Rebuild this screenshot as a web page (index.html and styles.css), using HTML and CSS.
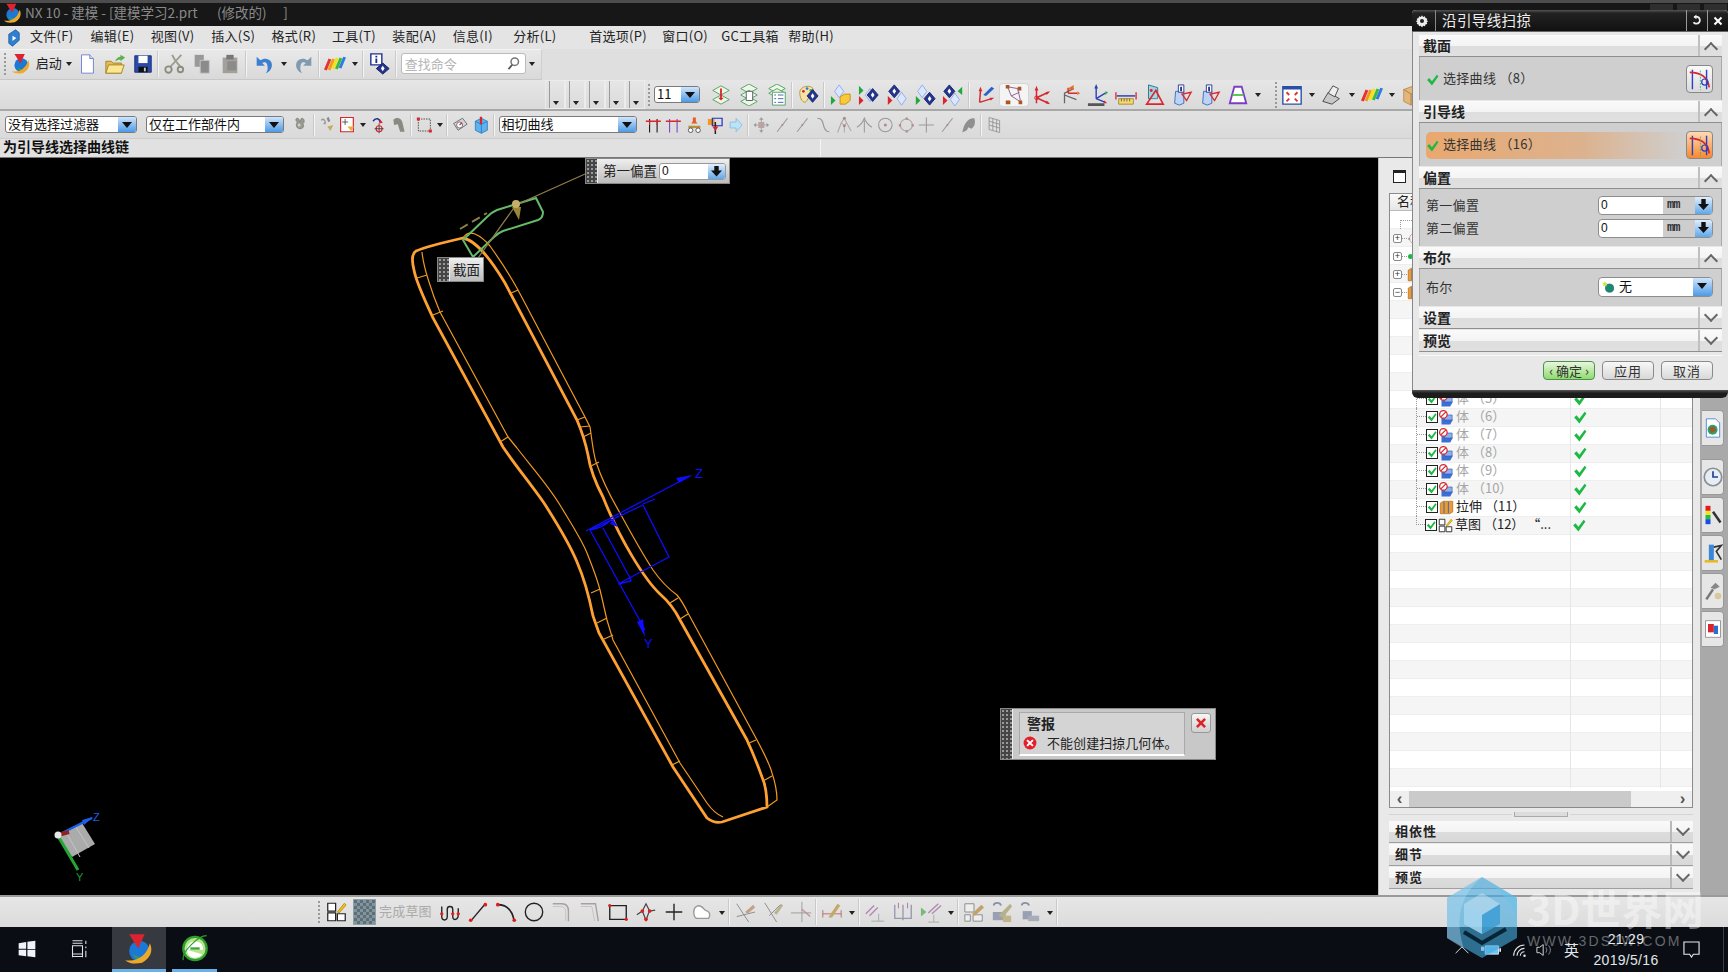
FILE: index.html
```html
<!DOCTYPE html>
<html lang="zh-CN">
<head>
<meta charset="utf-8">
<title>NX 10 - 建模</title>
<link rel="stylesheet" href="styles.css">
</head>
<body>
<svg class="defs" aria-hidden="true">
<defs>
<g id="dl"><path d="M0-7l5 7-5 7-5-7z" fill="#dbe7ff" stroke="#8fa8e8"/></g>
<g id="dd"><path d="M0-7l6 7-6 7-6-7z" fill="#24358f" stroke="#18246a"/><path d="M0-3l2 3-2 3-2-3z" fill="#fff"/></g>
<g id="gt"><path d="M0-5l5 5-5 5z" fill="#1fa83c"/></g>
<g id="rt"><path d="M0-5l5 5-5 5z" fill="#d8262c"/></g>
<g id="lay"><path d="M12-5l9 5-9 5-9-5z" fill="#eef7e6" stroke="#4f9f60"/></g>
</defs>
<symbol id="nx" viewBox="0 0 24 24"><circle cx="12" cy="14" r="8" fill="#1a78d6"/><path d="M7 16c3 3 8 4 10 1-2 5-8 5-10-1z" fill="#3aa24a"/><path d="M4 1h12l-5 11z" fill="#dc2430"/><path d="M1 21c9 2 17-4 19-13 3 6 0 12-6 15-5 1-10 1-13-2z" fill="#efa92a"/></symbol>
<symbol id="mn" viewBox="0 0 24 24"><path d="M5 7l9-6 5 4v10l-9 8-5-4z" fill="#2f7fd0" stroke="#1d5a9e"/><path d="M10 9v7l5-4z" fill="#fff"/></symbol>
<symbol id="doc" viewBox="0 0 24 24"><path d="M6 2h9l4 4v16H6z" fill="#fff" stroke="#6a80d0"/><path d="M15 2v4h4" fill="#d7dff7" stroke="#6a80d0"/></symbol>
<symbol id="open" viewBox="0 0 24 24"><path d="M2 9h6l2 2h9v11H2z" fill="#e2bd53" stroke="#a4812c"/><path d="M2 22l3-9h17l-3 9z" fill="#fbe692" stroke="#a4812c"/><path d="M12 9c1-3 4-5 6-5V2l5 3-5 4V7c-2 0-4 1-6 2z" fill="#58b14a"/></symbol>
<symbol id="save" viewBox="0 0 24 24"><path d="M3 3h18v18H3z" fill="#2b4bab" stroke="#1c2f78"/><path d="M7 3h10v8H7z" fill="#fff"/><path d="M7 15h10v6H7z" fill="#111"/><path d="M13 16h2v4h-2z" fill="#ccc"/></symbol>
<symbol id="cut" viewBox="0 0 24 24"><path d="M20 2L8 15M10 2c2 5 5 9 9 13" stroke="#9b9b8e" stroke-width="2" fill="none"/><circle cx="6" cy="18" r="3.5" fill="none" stroke="#8c8c7c" stroke-width="2"/><circle cx="19" cy="18" r="3" fill="none" stroke="#8c8c7c" stroke-width="2"/></symbol>
<symbol id="copy" viewBox="0 0 24 24"><path d="M4 2h10v13H4z" fill="#999"/><path d="M10 8h10v14H10z" fill="#8b8b8b" stroke="#c7c7c7"/></symbol>
<symbol id="paste" viewBox="0 0 24 24"><path d="M4 5h16v17H4z" fill="#a2a098"/><path d="M8 2h8v5H8z" fill="#777"/><path d="M9 9h10v10H9z" fill="#8b8b8b"/></symbol>
<symbol id="undo" viewBox="0 0 24 24"><path d="M4 4v10h9l-3-3c3-2 6-1 6 6 0 2-1 4-2 5 5-2 8-7 6-12-2-4-8-5-12-2z" fill="#3c7ecf"/></symbol>
<symbol id="redo" viewBox="0 0 24 24"><path d="M20 4v10h-9l3-3c-3-2-6-1-6 6 0 2 1 4 2 5-5-2-8-7-6-12 2-4 8-5 12-2z" fill="#7f9bb0"/></symbol>
<symbol id="rb" viewBox="0 0 24 24"><path d="M5 6l3 1-5 12-3-1z" fill="#e4322c"/><path d="M9 6l3 1-5 12-3-1z" fill="#f29a1e"/><path d="M13 5l3 1-5 12-3-1z" fill="#f2e21e"/><path d="M17 5l3 1-5 12-3-1z" fill="#3db83d"/><path d="M21 4l3 1-5 12-3-1z" fill="#2b7be4"/></symbol>
<symbol id="info" viewBox="0 0 24 24"><path d="M2 1h12v12H2z" fill="#fff" stroke="#1c2f8a" stroke-width="1.5"/><path d="M7 3h2v2H7zM7 6h2v5H7z" fill="#1c2f8a"/><path d="M15 11l7 6-7 6-7-6z" fill="#24358f" stroke="#0e1a5a"/><path d="M15 14l2 3-2 3-2-3z" fill="#fff"/></symbol>
<symbol id="mag" viewBox="0 0 24 24"><circle cx="14" cy="9" r="6" fill="#fff" stroke="#777" stroke-width="2.4"/><path d="M10 14l-6 7" stroke="#555" stroke-width="3"/></symbol>
<symbol id="l1" viewBox="0 0 24 24"><use href="#lay" y="7"/><use href="#lay" y="17"/><path d="M12 5v11" stroke="#d8262c" stroke-width="2"/><path d="M9 15h6l-3 3z" fill="#d8262c"/></symbol>
<symbol id="l2" viewBox="0 0 24 24"><use href="#lay" y="5"/><use href="#lay" y="12"/><use href="#lay" y="19"/><path d="M9 8h7v10H9z" fill="#fff" stroke="#556"/></symbol>
<symbol id="l3" viewBox="0 0 24 24"><use href="#lay" y="5"/><use href="#lay" y="10"/><path d="M7 9h14v14H7z" fill="#fff" stroke="#4f9f60"/><path d="M9 12h2m2 0h6M9 16h2m2 0h6M9 20h2m2 0h6" stroke="#3a5aa8"/></symbol>
<symbol id="pal" viewBox="0 0 24 24"><path d="M3 9c0-7 13-9 15-3 1 4-5 3-5 6s-1 5-4 8c-4 0-6-6-6-11z" fill="#f5e4a8" stroke="#b8923a"/><circle cx="7" cy="8" r="1.5" fill="#d8262c"/><circle cx="11" cy="5" r="1.5" fill="#2b7be4"/><circle cx="15" cy="7" r="1.5" fill="#3db83d"/><use href="#dd" x="17" y="13"/></symbol>
<symbol id="d1" viewBox="0 0 24 24"><use href="#dl" x="10" y="8"/><path d="M11 14l5-3h6v7l-5 4h-6z" fill="#f9c93a" stroke="#c48e18"/><use href="#gt" x="1" y="18"/></symbol>
<symbol id="d2" viewBox="0 0 24 24"><use href="#gt" x="1" y="7"/><use href="#rt" x="1" y="18"/><use href="#dl" x="13" y="12"/><use href="#dd" x="16" y="12"/></symbol>
<symbol id="d3" viewBox="0 0 24 24"><use href="#dd" x="9" y="8"/><use href="#dl" x="17" y="16"/><use href="#rt" x="2" y="18"/></symbol>
<symbol id="d4" viewBox="0 0 24 24"><use href="#dl" x="9" y="8"/><use href="#dd" x="17" y="16"/><use href="#gt" x="2" y="18"/></symbol>
<symbol id="d5" viewBox="0 0 24 24"><use href="#dd" x="8" y="8"/><use href="#dl" x="14" y="17"/><use href="#rt" x="1" y="18"/><path d="M22 3v9l-5-4z" fill="#1fa83c"/></symbol>
<symbol id="c1" viewBox="0 0 24 24"><path d="M5 20L6 7M5 20l13-4" stroke="#d8262c" stroke-width="1.6" fill="none"/><path d="M6 3l2 5H4zM21 15l-4 3-1-3z" fill="#d8262c"/><path d="M9 12l9-9 3 2-9 8z" fill="#2a62c8"/></symbol>
<symbol id="c2" viewBox="0 0 24 24"><path d="M5 3l4 10 11 7M9 13l9-4M5 3l11 2 3 13" stroke="#8a5a88" fill="none"/><path d="M3 1h4v4H3zM16 3h4v4h-4zM3 18h5v4H3zM17 18h4v4h-4z" fill="#a52"/></symbol>
<symbol id="c3" viewBox="0 0 24 24"><path d="M6 21V6M6 15l13-6M6 15l13 6" stroke="#d8262c" stroke-width="1.6" fill="none"/><path d="M6 2l2 5H4zM21 8l-4 4-1-3zM21 22l-5-1 1-3z" fill="#d8262c"/><circle cx="6" cy="15" r="2" fill="none" stroke="#d8262c"/></symbol>
<symbol id="c4" viewBox="0 0 24 24"><path d="M6 21V10l10-5M6 12l13 5" stroke="#666" stroke-width="1.4" fill="none"/><path d="M10 10V4M10 10h10" stroke="#d8262c" stroke-width="1.6"/><path d="M8 6l8-5v5zM20 8l3 2-3 2z" fill="#ea6a24"/></symbol>
<symbol id="c5" viewBox="0 0 24 24"><path d="M10 16V3M10 16l10-6M10 16l10 4" stroke="#2a3fb0" stroke-width="1.5" fill="none"/><path d="M10 0l2 5H8z" fill="#2a3fb0"/><path d="M20 8l3 1-3 3z" fill="#1fa83c"/><path d="M22 21l-4 0 1-3z" fill="#d8262c"/><path d="M1 21h18v3H1z" fill="#555"/></symbol>
<symbol id="rul" viewBox="0 0 24 24"><path d="M2 13h20" stroke="#2a3fb0" stroke-width="1.6"/><path d="M1 9v8M23 9v8" stroke="#d8262c" stroke-width="1.4"/><path d="M4 16h16v6H4z" fill="#f2d878" stroke="#a8892c"/><path d="M7 16v3m3-3v3m3-3v3m3-3v3" stroke="#7a641c"/></symbol>
<symbol id="ang" viewBox="0 0 24 24"><path d="M6 1l10 3v12H6z" fill="#9fd3e8" stroke="#2a6e88"/><path d="M4 22L14 7l8 15z" fill="#fff" fill-opacity=".1" stroke="#d8262c" stroke-width="1.8"/><circle cx="9" cy="7" r="1.6" fill="#d8262c"/></symbol>
<symbol id="w1" viewBox="0 0 24 24"><path d="M5 8h9v13l-5 2-5-2z" fill="#bcd3f4" stroke="#3d6bc0"/><path d="M8 1h6v8H8z" fill="#fff" stroke="#24358f"/><path d="M10 3h2v5h-2z" fill="#24358f"/><path d="M12 11l10-2-5 9z" fill="none" stroke="#d8262c" stroke-width="1.4"/></symbol>
<symbol id="w2" viewBox="0 0 24 24"><path d="M8 3h8l5 18H3z" fill="#fff" stroke="#7a3ec0" stroke-width="2"/><path d="M6 12h12" stroke="#4cc24c" stroke-width="2"/></symbol>
<symbol id="fit" viewBox="0 0 24 24"><path d="M2 3h20v19H2z" fill="#fff" stroke="#2a4fa8" stroke-width="1.5"/><path d="M2 3h20v3H2z" fill="#2a4fa8"/><path d="M6 9l3 3M18 9l-3 3M6 19l3-3M18 19l-3-3" stroke="#e2332c" stroke-width="2"/></symbol>
<symbol id="rend" viewBox="0 0 24 24"><path d="M2 19l6-10 12 7-8 6z" fill="#c8c8c8" stroke="#444"/><path d="M8 10l5-8 6 3-4 9z" fill="#eee" stroke="#444"/></symbol>
<symbol id="box" viewBox="0 0 24 24"><path d="M3 6l11-4 8 4-11 5zM3 6v13l8 4V11zM22 6v12l-11 5V11z" fill="#e3b77c" stroke="#b98d52"/></symbol>
<symbol id="f1" viewBox="0 0 24 24"><path d="M7 3c-3 0-3 4 0 5-3 2-2 9 3 9s6-4 4-7c3-1 2-7-1-7-2 0-2 3-3 5-1-2-1-5-3-5z" fill="#9a9a90" stroke="#777"/><circle cx="9" cy="12" r="2" fill="#d0d0c8"/></symbol>
<symbol id="f2" viewBox="0 0 24 24"><path d="M4 6c2-4 6 0 5 4h-2" stroke="#999" fill="none" stroke-width="2"/><path d="M12 14l8-2-4 8z" fill="#c4ad62"/><path d="M12 2h3v6h-3z" fill="#888" transform="rotate(-20 13 5)"/></symbol>
<symbol id="f3" viewBox="0 0 24 24"><path d="M3 2h17v19H3z" fill="#fff" stroke="#d8262c" stroke-width="1.6"/><path d="M5 8h8M9 4v8" stroke="#333"/><path d="M12 14h9l-4 6z" fill="#e8b030"/></symbol>
<symbol id="f4" viewBox="0 0 24 24"><path d="M5 7c3-5 9-4 9 1" stroke="#24358f" stroke-width="2" fill="none"/><path d="M14 4l4 5-5 1z" fill="#d8262c"/><path d="M13 10v13" stroke="#222"/><circle cx="13" cy="17" r="4" fill="none" stroke="#d8262c" stroke-width="1.5"/><path d="M7 17h12" stroke="#222"/></symbol>
<symbol id="f5" viewBox="0 0 24 24"><path d="M4 5c4-4 10-3 12 3l3 13h-6l-3-10-5 1z" fill="#8a8a82"/></symbol>
<symbol id="sbox" viewBox="0 0 24 24"><path d="M4 4h16v16H4z" fill="none" stroke="#222" stroke-dasharray="2 1.4"/><path d="M2 2h4v4H2zM18 18h4v4h-4z" fill="#d8262c"/></symbol>
<symbol id="cam" viewBox="0 0 24 24"><path d="M3 10l12-7 6 8-12 8z" fill="#d0d4dc" stroke="#555"/><circle cx="11" cy="12" r="4" fill="#fff" stroke="#555"/><path d="M11 12l3-3" stroke="#d8262c" stroke-width="1.6"/></symbol>
<symbol id="cube" viewBox="0 0 24 24"><path d="M4 7l8-4 8 4v12l-8 4-8-4z" fill="#5cb3ee" stroke="#2a6fb8"/><path d="M12 11v12M4 7l8 4 8-4" stroke="#2a6fb8" fill="none"/><path d="M10 1h3v10h-3z" fill="#d8262c"/></symbol>
<symbol id="tt1" viewBox="0 0 24 24"><path d="M7 4v18M17 4v18" stroke="#111" stroke-width="1.4"/><path d="M2 7h20" stroke="#d8262c" stroke-width="2"/><path d="M7 6v6M17 6v6" stroke="#d8262c" stroke-width="1.4"/></symbol>
<symbol id="tt2" viewBox="0 0 24 24"><path d="M7 4v18M17 4v18" stroke="#7a3ec0" stroke-width="1.4"/><path d="M2 7h20" stroke="#d8262c" stroke-width="2"/></symbol>
<symbol id="hat" viewBox="0 0 24 24"><path d="M10 2h4v5l2 3H8l2-3z" fill="#ea5a24"/><path d="M4 13h16v3H4z" fill="#b8923a"/><circle cx="7" cy="19" r="3" fill="#fff" stroke="#333"/><circle cx="17" cy="19" r="3" fill="#fff" stroke="#333"/></symbol>
<symbol id="sq" viewBox="0 0 24 24"><path d="M2 4h9v8H2z" fill="#f29a1e"/><path d="M8 3h13v10H8z" fill="none" stroke="#1c2fc8" stroke-width="1.6"/><path d="M12 8v16" stroke="#222" stroke-width="2"/><path d="M8 14h8l-4 6z" fill="#d8262c"/></symbol>
<symbol id="arr" viewBox="0 0 24 24"><path d="M5 8h8V3l8 9-8 9v-5H5z" fill="#b9e4f8" stroke="#7fb7d8"/></symbol>
<symbol id="g1" viewBox="0 0 24 24"><path d="M12 2v20M2 12h20" stroke="#aaa" stroke-width="1.5"/><path d="M12 2l3 3H9zM12 22l-3-3h6zM2 12l3-3v6zM22 12l-3 3V9z" fill="#999"/><path d="M8 8h8v8H8z" fill="#b9a3a3"/></symbol>
<symbol id="g2" viewBox="0 0 24 24"><path d="M5 21L19 3" stroke="#9a9a9a" stroke-width="1.5"/><circle cx="12" cy="12" r="1.4" fill="#b48888"/></symbol>
<symbol id="g3" viewBox="0 0 24 24"><path d="M4 3c9 0 7 10 10 14 1 2 4 4 6 4" stroke="#999" stroke-width="1.6" fill="none"/></symbol>
<symbol id="g4" viewBox="0 0 24 24"><path d="M3 22l5-13 4-6 3 6 6 11M8 9l4 4 3-4M12 13v9" stroke="#aaa" stroke-width="1.4" fill="none"/><circle cx="12" cy="3" r="2" fill="#b48888"/><circle cx="12" cy="13" r="2" fill="#b48888"/></symbol>
<symbol id="g5" viewBox="0 0 24 24"><path d="M2 15C8 12 10 8 12 3c2 5 5 9 10 12M12 6v16" stroke="#999" stroke-width="1.4" fill="none"/></symbol>
<symbol id="g6" viewBox="0 0 24 24"><circle cx="12" cy="12" r="9" fill="none" stroke="#999" stroke-width="1.4"/><circle cx="12" cy="12" r="2" fill="#b48888"/></symbol>
<symbol id="g7" viewBox="0 0 24 24"><circle cx="12" cy="12" r="8" fill="none" stroke="#aaa" stroke-width="1.4"/><path d="M11 2h3v3h-3zM11 19h3v3h-3zM2 11h3v3H2zM19 11h3v3h-3z" fill="#b48888"/></symbol>
<symbol id="g8" viewBox="0 0 24 24"><path d="M12 2v20M2 12h20" stroke="#999" stroke-width="1.4"/></symbol>
<symbol id="g9" viewBox="0 0 24 24"><path d="M4 22C6 10 12 2 20 3c2 6 0 12-4 14l-4-2-2 4z" fill="#8f8f8f"/></symbol>
<symbol id="g10" viewBox="0 0 24 24"><path d="M5 2l14 4v16L5 18z" fill="#e0e0e0" stroke="#888"/><path d="M5 7l14 4M5 12l14 4M10 3v16M15 5v16" stroke="#888"/></symbol>
<symbol id="win" viewBox="0 0 24 24"><path d="M2 5l9-1.400v8H2zM12.500 3.300L22 2v10h-9.500zM2 13h9v7.600L2 19.400zM12.500 13H22v9l-9.500-1.300z" fill="#f0f4f8"/></symbol>
<symbol id="task" viewBox="0 0 24 24"><path d="M3 2h12M3 5h12M3 8h12v10H3zM3 21h12M3 18v4M15 18v4M19 2v4M19 9v2M19 14v8" fill="none" stroke="#dfe3e8" stroke-width="1.300"/></symbol>
<symbol id="ie" viewBox="0 0 24 24"><circle cx="12" cy="12" r="10" fill="#b6e58a" stroke="#2f9e2f" stroke-width="2"/><path d="M5 13h14c0-5-3-7-7-7s-7 3-7 7c0 4 3 7 7 7 3 0 5-1 6-3" fill="#fff"/><path d="M8 11h8v2H8z" fill="#3aa43a"/><path d="M2 22C0 15 15 1 22 1" stroke="#2f9e2f" fill="none"/></symbol>
<symbol id="chk" viewBox="0 0 24 24"><path d="M2 13l4-4 5 6L20 3l3 3-12 17z" fill="#1eb944"/></symbol>
<symbol id="body" viewBox="0 0 24 24"><path d="M4 12h14l4 4-4 7H4z" fill="#3b6fd4"/><path d="M9 8h12v8H9z" fill="#8fb0ec" stroke="#2d56b0"/><circle cx="7" cy="7" r="6" fill="#fff" stroke="#d8262c" stroke-width="2"/><path d="M3 11l8-8" stroke="#d8262c" stroke-width="2"/></symbol>
<symbol id="ext" viewBox="0 0 24 24"><path d="M2 5l5-3h15v17l-5 3H2z" fill="#f09a2c" stroke="#a85f14"/><path d="M8 3v18M15 3v18" stroke="#2b6fd0" stroke-width="1.600"/></symbol>
<symbol id="skt" viewBox="0 0 24 24"><path d="M2 2h9v9H2zM2 13h9v9H2zM13 14h9v8h-9z" fill="#fff" stroke="#222" stroke-width="1.400"/><path d="M13 12l8-10 2 2-8 9z" fill="#f2c21e" stroke="#b58a10"/></symbol>
<symbol id="cu" viewBox="0 0 26 27"><path d="M5 3v22M21 3v22" stroke="#2a3fc8" stroke-width="1.600"/><path d="M2 6c10 0 20 3 22 17" stroke="#d8262c" stroke-width="1.800" fill="none"/><path d="M14 4v22" stroke="#3aa88a" stroke-dasharray="2 1.500"/><circle cx="19" cy="17" r="3.500" fill="none" stroke="#2a3fc8" stroke-width="1.400"/></symbol>
<symbol id="bool" viewBox="0 0 24 24"><circle cx="13" cy="14" r="7" fill="#1a8a78" stroke="#0d5a4e"/><path d="M5 2l1.500 3 3 .5-2 2.200.5 3.300L5 9.500 2 11l.5-3.300L.5 5.500l3-.5z" fill="#c8e640"/></symbol>
<symbol id="err" viewBox="0 0 24 24"><circle cx="12" cy="12" r="11" fill="#e3202a"/><path d="M7 7l10 10M17 7L7 17" stroke="#fff" stroke-width="3.400"/></symbol>
<symbol id="x" viewBox="0 0 24 24"><path d="M5 5l14 14M19 5L5 19" stroke="#dd2228" stroke-width="4.500"/></symbol>
<symbol id="t1" viewBox="0 0 24 24"><path d="M4 1h11l5 5v17H4z" fill="#fff" stroke="#3d7bd0"/><circle cx="11.500" cy="14" r="6" fill="#2fa16a"/><path d="M7 12l6-2 3 5-6 3z" fill="#9a5a2c"/></symbol>
<symbol id="t2" viewBox="0 0 24 24"><circle cx="12" cy="12" r="10.500" fill="#e7edf4" stroke="#8a8f96" stroke-width="2"/><path d="M12 5v7h6" stroke="#1c3f9a" stroke-width="2" fill="none"/></symbol>
<symbol id="t3" viewBox="0 0 24 24"><path d="M3 1h6v6H3z" fill="#e21c1c"/><path d="M3 7h6v5H3z" fill="#f4e21c"/><path d="M3 12h6v5H3z" fill="#1cc23c"/><path d="M3 17h6v6H3z" fill="#1c4ce2"/><path d="M12 8l9 13" stroke="#333" stroke-width="3"/></symbol>
<symbol id="t4" viewBox="0 0 24 24"><path d="M7 2h6v20H7z" fill="#3a86d8"/><path d="M2 22h16" stroke="#e8b81c" stroke-width="3"/><path d="M13 5l9-2-6 7 6 10" stroke="#333" stroke-width="2" fill="none"/></symbol>
<symbol id="t5" viewBox="0 0 24 24"><path d="M9 8l6-6 5 5-6 3z" fill="#888"/><path d="M12 10l-8 12" stroke="#777" stroke-width="3"/><circle cx="18" cy="18" r="4" fill="#d8c89a"/></symbol>
<symbol id="t6" viewBox="0 0 24 24"><path d="M3 2h18v20H3z" fill="#fff" stroke="#888"/><path d="M6 6h7v10H6z" fill="#d8262c"/><path d="M13 8h5v10h-5z" fill="#2a6fd0"/></symbol>
</svg>

<div class="app">
  <header class="title">
    <svg class="tlogo"><use href="#nx"/></svg>
    <span class="ttext">NX 10 - 建模 - [建模学习2.prt　  (修改的)　 ]</span>
    <span class="winbtns"><i></i><i></i><i></i></span>
  </header>

  <nav class="menu">
    <svg class="mlogo"><use href="#mn"/></svg>
    <span class="m">文件(F)</span><span class="m">编辑(E)</span><span class="m">视图(V)</span><span class="m">插入(S)</span><span class="m">格式(R)</span><span class="m">工具(T)</span><span class="m">装配(A)</span><span class="m">信息(I)</span><span class="m m-w">分析(L)</span><span class="m m-p">首选项(P)</span><span class="m m-c">窗口(O)</span><span class="m m-g">GC工具箱</span><span class="m">帮助(H)</span>
  </nav>

  <div class="row1">
    <div class="tb tb1">
      <span class="gr"></span>
      <svg class="s21 lg"><use href="#nx"/></svg><span class="start">启动</span><span class="c c-start"></span>
      <svg class="s28"><use href="#doc"/></svg><svg class="s28"><use href="#open"/></svg><svg class="s28"><use href="#save"/></svg><span class="sp"></span>
      <svg class="s28"><use href="#cut"/></svg><svg class="s28"><use href="#copy"/></svg><svg class="s28"><use href="#paste"/></svg><span class="sp sp-l"></span>
      <svg class="s28"><use href="#undo"/></svg><span class="c"></span><svg class="s28"><use href="#redo"/></svg><span class="sp"></span>
      <svg class="s28"><use href="#rb"/></svg><span class="c"></span><span class="sp sp-w"></span>
      <svg class="s28"><use href="#info"/></svg><span class="sp sp-w"></span>
      <span class="search"><span class="ph">查找命令</span><svg class="mag"><use href="#mag"/></svg></span>
      <span class="c"></span>
    </div>
  </div>

  <div class="row2">
    <span class="stack"></span><span class="stack"></span><span class="stack"></span><span class="stack"></span><span class="stack"></span>
    <span class="gr"></span>
    <span class="combo c11"><span class="cv">11</span><span class="dd"></span></span>
    <svg class="s28"><use href="#l1"/></svg><svg class="s28"><use href="#l2"/></svg><svg class="s28"><use href="#l3"/></svg><span class="sp"></span>
    <svg class="s28"><use href="#pal"/></svg><span class="sp sp-w"></span>
    <svg class="s28"><use href="#d1"/></svg><svg class="s28"><use href="#d2"/></svg><svg class="s28"><use href="#d3"/></svg><svg class="s28"><use href="#d4"/></svg><svg class="s28"><use href="#d5"/></svg><span class="sp sp-w"></span>
    <svg class="s28"><use href="#c1"/></svg><svg class="s28 act"><use href="#c2"/></svg><svg class="s28"><use href="#c3"/></svg><svg class="s28"><use href="#c4"/></svg><svg class="s28"><use href="#c5"/></svg><svg class="s28"><use href="#rul"/></svg><svg class="s28"><use href="#ang"/></svg><svg class="s28"><use href="#w1"/></svg><svg class="s28"><use href="#w1"/></svg><svg class="s28"><use href="#w2"/></svg><span class="c"></span>
    <span class="brk"><span class="gr"></span></span>
    <svg class="s28"><use href="#fit"/></svg><span class="c"></span><svg class="s28"><use href="#rend"/></svg><span class="c"></span><svg class="s28"><use href="#rb"/></svg><span class="c"></span><svg class="s28"><use href="#box"/></svg>
  </div>

  <div class="row3">
    <span class="combo f1c"><span class="cv">没有选择过滤器</span><span class="dd"></span></span>
    <span class="combo f2c"><span class="cv">仅在工作部件内</span><span class="dd"></span></span>
    <svg class="s21 first"><use href="#f1"/></svg><span class="sp"></span>
    <svg class="s21"><use href="#f2"/></svg><svg class="s21"><use href="#f3"/></svg><span class="c"></span><svg class="s21"><use href="#f4"/></svg><svg class="s21"><use href="#f5"/></svg><span class="sp"></span>
    <svg class="s21"><use href="#sbox"/></svg><span class="c"></span><span class="sp"></span>
    <svg class="s21"><use href="#cam"/></svg><svg class="s21"><use href="#cube"/></svg><span class="sp"></span>
    <span class="combo f3c"><span class="cv">相切曲线</span><span class="dd"></span></span>
    <svg class="s21"><use href="#tt1"/></svg><svg class="s21"><use href="#tt2"/></svg><svg class="s21"><use href="#hat"/></svg><svg class="s21"><use href="#sq"/></svg><svg class="s21"><use href="#arr"/></svg><span class="sp"></span>
    <svg class="s21"><use href="#g1"/></svg><svg class="s21"><use href="#g2"/></svg><svg class="s21"><use href="#g2"/></svg><svg class="s21"><use href="#g3"/></svg><svg class="s21"><use href="#g4"/></svg><svg class="s21"><use href="#g5"/></svg><svg class="s21"><use href="#g6"/></svg><svg class="s21"><use href="#g7"/></svg><svg class="s21"><use href="#g8"/></svg><svg class="s21"><use href="#g2"/></svg><svg class="s21"><use href="#g9"/></svg><span class="sp"></span>
    <svg class="s21"><use href="#g10"/></svg>
  </div>

  <div class="cue"><span class="cuetext">为引导线选择曲线链</span><span class="cuerest"></span></div>

  <main class="work">
    <div class="view">
      <svg class="model" viewBox="0 158 1378 737" width="1378" height="737">
        <g fill="none" stroke="#ffa033">
          <path stroke-width="2.800" d="M463 238C450 241 425 247 416 251C411 254 412 262 414 270C416 282 424 298 433 318L503 447C515 465 530 483 544 503C560 528 570 545 577 562C584 578 589 596 593 616L599 633L673 767L707 818C712 822 717 823 722 822L767 807C767 795 766 786 762 777C757 763 752 751 747 740L680 620C675 610 668 601 660 594C645 580 620 540 603 497C595 482 590 468 588 455C585 440 582 432 577 420L505 283C490 258 475 240 463 238Z"/>
          <path stroke="#f39a1f" stroke-width="1.200" d="M422 252C423 262 425 270 429 282C433 295 437 305 440 312L508 437L517 448"/>
          <path stroke="#f39a1f" stroke-width="1.200" d="M463 238C466 233 470 232 475 234C482 237 485 240 490 246C500 260 510 275 518 290L585 417L590 427C592 440 593 452 596 462C602 480 610 496 620 513C632 535 642 553 653 570C660 580 670 590 677 595C682 601 685 607 688 613L757 740C765 755 770 765 772 773C776 785 777 793 777 800L767 807"/>
          <path stroke="#f39a1f" stroke-width="1.200" d="M517 448C530 465 548 485 560 505C572 525 582 540 587 553C593 568 597 578 600 590C603 602 605 612 607 620L613 640L680 763L707 803C712 810 718 815 723 817"/>
          <path stroke="#f39a1f" stroke-width="1.200" d="M417 278L427 275M433 315L443 311M500 442L508 437M509 294L518 290M577 420L585 417M580 427L590 426M583 437L591 433M589 467L599 462M591 593L600 589M597 623L607 618M602 640L613 635M672 765L680 761M670 603L678 598M680 619L688 614M747 744L756 740M763 781L772 776"/>
        </g>
        <path fill="none" stroke="#66bb6a" stroke-width="2" d="M463 240L487 217Q492 212 497 210L536 198L543 212Q543 218 538 220L503 231Q498 233 494 237L473 257Z"/>
        <path fill="none" stroke="#8f7d48" stroke-width="1.200" d="M585 174L516 205L478 258"/>
        <path fill="none" stroke="#8f7d48" stroke-width="2" stroke-dasharray="9 5" d="M460 229L487 213"/>
        <path fill="#9a8638" d="M512 207L521 207L519 220Z"/>
        <circle cx="516" cy="204" r="4" fill="#c5b06a"/>
        <g fill="none" stroke="#0d0dff" stroke-width="1.300">
          <path d="M586 531L690 476M590 530L645 630M590 530L643 505L669 557L618 584M603 528L630 578M618 584L631 581L630 578M643 504L655 499M590 530Q603 528 612 519"/>
        </g>
        <path fill="#0d0dff" d="M693 475L679 483L676 478ZM645 637L637 622L643 619ZM613 519L618 527L610 524Z"/>
        <text class="axis" x="695" y="478">Z</text>
        <text class="axis" x="644" y="648">Y</text>
        <path fill="#ababab" d="M58 835L82 823L95 844L72 857Z"/>
        <path fill="none" stroke="#c4c4c4" d="M66 832L80 857M76 827L89 848"/>
        <path d="M58 835L92 818" stroke="#1860e8" stroke-width="2.500"/>
        <path fill="#1860e8" d="M93 817L82 820L84 825Z"/>
        <path d="M58 836L78 870" stroke="#22a833" stroke-width="3"/>
        <path d="M58 835L69 832" stroke="#8c2222" stroke-width="4"/>
        <circle cx="58" cy="835" r="3.500" fill="#e8e8e8"/>
        <text class="triz" x="93" y="821">Z</text>
        <text class="triy" x="76" y="881">Y</text>
      </svg>
    </div>
    <aside class="nav">
      <div class="navtop"><span class="winbox"></span></div>
      <div class="table">
        <div class="thead"><span class="th">名称</span></div>
        <div class="tbody">
          <div class="tr"><span class="dots"></span><svg class="ic"><use href="#g6"/></svg></div>
          <div class="tr"><span class="pm">+</span><span class="dash"></span><svg class="ic"><use href="#g7"/></svg></div>
          <div class="tr"><span class="pm">+</span><span class="dash"></span><span class="gd"></span></div>
          <div class="tr"><span class="pm">+</span><span class="dash"></span><svg class="ic"><use href="#ext"/></svg></div>
          <div class="tr"><span class="pm">−</span><span class="dash"></span><svg class="ic"><use href="#ext"/></svg></div>
          <div class="hidden-rows"></div>
          <div class="tr ch"><span class="tk"></span><span class="cb"><svg><use href="#chk"/></svg></span><svg class="ic"><use href="#body"/></svg><span class="nm off">体 （5）</span><svg class="ok"><use href="#chk"/></svg></div>
          <div class="tr ch"><span class="tk"></span><span class="cb"><svg><use href="#chk"/></svg></span><svg class="ic"><use href="#body"/></svg><span class="nm off">体 （6）</span><svg class="ok"><use href="#chk"/></svg></div>
          <div class="tr ch"><span class="tk"></span><span class="cb"><svg><use href="#chk"/></svg></span><svg class="ic"><use href="#body"/></svg><span class="nm off">体 （7）</span><svg class="ok"><use href="#chk"/></svg></div>
          <div class="tr ch"><span class="tk"></span><span class="cb"><svg><use href="#chk"/></svg></span><svg class="ic"><use href="#body"/></svg><span class="nm off">体 （8）</span><svg class="ok"><use href="#chk"/></svg></div>
          <div class="tr ch"><span class="tk"></span><span class="cb"><svg><use href="#chk"/></svg></span><svg class="ic"><use href="#body"/></svg><span class="nm off">体 （9）</span><svg class="ok"><use href="#chk"/></svg></div>
          <div class="tr ch"><span class="tk"></span><span class="cb"><svg><use href="#chk"/></svg></span><svg class="ic"><use href="#body"/></svg><span class="nm off">体 （10）</span><svg class="ok"><use href="#chk"/></svg></div>
          <div class="tr ch"><span class="tk"></span><span class="cb"><svg><use href="#chk"/></svg></span><svg class="ic"><use href="#ext"/></svg><span class="nm">拉伸 （11）</span><svg class="ok"><use href="#chk"/></svg></div>
          <div class="tr ch last"><span class="tk"></span><span class="cb"><svg><use href="#chk"/></svg></span><svg class="ic"><use href="#skt"/></svg><span class="nm">草图 （12） “...</span><svg class="ok"><use href="#chk"/></svg></div>
        </div>
        <div class="hscroll"><span class="ar">‹</span><span class="thumb"></span><span class="ar">›</span></div>
      </div>
      <div class="split"><span class="handle"></span></div>
      <div class="nh"><span>相依性</span><b class="chev dn"></b></div>
      <div class="nh"><span>细节</span><b class="chev dn"></b></div>
      <div class="nh"><span>预览</span><b class="chev dn"></b></div>
    </aside>
    <div class="tabs">
      <span class="tab"><svg><use href="#t1"/></svg></span>
      <span class="tab"><svg><use href="#t2"/></svg></span>
      <span class="tab"><svg><use href="#t3"/></svg></span>
      <span class="tab"><svg><use href="#t4"/></svg></span>
      <span class="tab"><svg><use href="#t5"/></svg></span>
      <span class="tab"><svg><use href="#t6"/></svg></span>
    </div>
  </main>

  <div class="sketchbar">
    <span class="gr"></span>
    <svg class="s21 sk0"><use href="#skt"/></svg>
    <span class="flag"></span>
    <span class="fin">完成草图</span>
    <svg class="s28"><use href="#b1"/></svg><svg class="s28"><use href="#b2"/></svg><svg class="s28"><use href="#b3"/></svg><svg class="s28"><use href="#b4"/></svg><svg class="s28"><use href="#b5"/></svg><svg class="s28"><use href="#b6"/></svg><svg class="s28"><use href="#b7"/></svg><svg class="s28"><use href="#b8"/></svg><svg class="s28"><use href="#b9"/></svg><svg class="s28"><use href="#b10"/></svg><span class="c"></span><span class="sp"></span>
    <svg class="s28"><use href="#b11"/></svg><svg class="s28"><use href="#b12"/></svg><svg class="s28"><use href="#b13"/></svg><span class="sp"></span>
    <svg class="s28"><use href="#b14"/></svg><span class="c"></span><span class="sp"></span>
    <svg class="s28"><use href="#b15"/></svg><svg class="s28"><use href="#b16"/></svg><svg class="s28"><use href="#b17"/></svg><span class="c"></span><span class="sp"></span>
    <svg class="s28"><use href="#b18"/></svg><svg class="s28"><use href="#b19"/></svg><svg class="s28"><use href="#b20"/></svg><span class="c"></span><span class="sp"></span>
  </div>

  <footer class="taskbar">
    <svg class="tk-win"><use href="#win"/></svg>
    <svg class="tk-view"><use href="#task"/></svg>
    <span class="tk-app active"><svg><use href="#nx"/></svg></span>
    <span class="tk-app ie"><svg><use href="#ie"/></svg></span>
    <span class="tray">
      <svg class="tr-i" viewBox="0 0 20 14"><path d="M2 11l8-8 8 8" fill="none" stroke="#dfe3e8" stroke-width="1.200"/></svg>
      <svg class="tr-i bat" viewBox="0 0 24 14"><path d="M5 2h16v10H5z" fill="#6fc4f4" stroke="#eaf4fb"/><path d="M0 3h4v5H0z" fill="#eaf4fb"/><path d="M22 5h2v4h-2z" fill="#eaf4fb"/></svg>
      <svg class="tr-i wifi" viewBox="0 0 18 16"><path d="M2 15a13 13 0 0 1 13-13M6 15a9 9 0 0 1 9-9M10 15a5 5 0 0 1 5-5" fill="none" stroke="#e2e6ea" stroke-width="1.300"/><circle cx="15" cy="15" r="1.500" fill="#e2e6ea"/></svg>
      <svg class="tr-i vol" viewBox="0 0 20 16"><path d="M1 5h3l4-3v12l-4-3H1z" fill="none" stroke="#e2e6ea"/><path d="M11 5a5 5 0 0 1 0 6M14 3a8 8 0 0 1 0 10" fill="none" stroke="#8a9096"/></svg>
      <span class="ime">英</span>
      <span class="clock"><span>21:29</span><span>2019/5/16</span></span>
      <svg class="tr-i note" viewBox="0 0 18 18"><path d="M1 1h16v13h-6l-2 3-2-3H1z" fill="none" stroke="#e6eaee" stroke-width="1.200"/></svg>
      <span class="desk"></span>
    </span>
  </footer>

  <!-- overlays -->
  <div class="pop pop-off">
    <span class="grip"></span>
    <span class="poplab">第一偏置</span>
    <span class="popinput"><span class="cv">0</span><span class="dd2"></span></span>
  </div>
  <div class="pop pop-sec"><span class="grip"></span><span class="poplab">截面</span></div>
  <div class="pop pop-warn">
    <span class="grip"></span>
    <div class="warnbox">
      <strong>警报</strong>
      <div class="warnmsg"><svg><use href="#err"/></svg><span>不能创建扫掠几何体。</span></div>
    </div>
    <span class="warnx"><svg><use href="#x"/></svg></span>
  </div>

  <section class="dialog">
    <div class="dtitle">
      <svg class="gear" viewBox="0 0 24 24"><path d="M12 2l2 3 3-1 1 3 3 1-1 3 3 1-3 2 1 3-3 1-1 3-3-1-2 3-2-3-3 1-1-3-3-1 1-3-3-2 3-1-1-3 3-1 1-3 3 1z" fill="#eee"/><circle cx="12" cy="12" r="3.500" fill="#222"/></svg>
      <span class="dname">沿引导线扫掠</span>
      <span class="dbtn"><svg viewBox="0 0 24 24"><path d="M7 5h6a6 6 0 1 1-7 9" fill="none" stroke="#eee" stroke-width="3"/><path d="M11 1v8l-5-4z" fill="#eee"/></svg></span>
      <span class="dbtn"><svg viewBox="0 0 24 24"><path d="M6 6l12 12M18 6L6 18" stroke="#fff" stroke-width="3.500"/></svg></span>
    </div>
    <div class="dbody">
      <div class="gh"><span>截面</span><b class="chev up"></b></div>
      <div class="gb sel"><div class="lab"><svg><use href="#chk"/></svg><span>选择曲线 （8）</span></div><span class="cubtn"><svg><use href="#cu"/></svg></span></div>
      <div class="gh gt"><span>引导线</span><b class="chev up"></b></div>
      <div class="gb sel"><div class="lab on"><svg><use href="#chk"/></svg><span>选择曲线 （16）</span></div><span class="cubtn on"><svg><use href="#cu"/></svg></span></div>
      <div class="gh gt"><span>偏置</span><b class="chev up"></b></div>
      <div class="gb off">
        <div class="fld"><span class="fl">第一偏置</span><span class="num"><span class="cv">0</span><span class="mm">mm</span><span class="dd2"></span></span></div>
        <div class="fld"><span class="fl">第二偏置</span><span class="num"><span class="cv">0</span><span class="mm">mm</span><span class="dd2"></span></span></div>
      </div>
      <div class="gh gt"><span>布尔</span><b class="chev up"></b></div>
      <div class="gb boolb"><div class="fld"><span class="fl">布尔</span><span class="num bl"><svg><use href="#bool"/></svg><span class="cv">无</span><span class="dd"></span></span></div></div>
      <div class="gh gt"><span>设置</span><b class="chev dn"></b></div>
      <div class="gh gt"><span>预览</span><b class="chev dn"></b></div>
      <div class="dfoot"><button class="btn ok2">‹ 确定 ›</button><button class="btn">应用</button><button class="btn">取消</button></div>
    </div>
    <div class="dbottom"></div>
  </section>

  <div class="wm">
    <svg class="wmlogo" viewBox="0 0 72 82">
      <path d="M36 0L71 21V61L36 81L1 61V21Z" fill="#43a9de" fill-opacity=".62"/>
      <path d="M36 0L71 21V40C62 20 48 8 36 0Z" fill="#69c2ec" fill-opacity=".5"/>
      <path d="M1 61V21L36 0C15 18 8 40 18 72Z" fill="#bfe3f5" fill-opacity=".35"/>
      <path d="M36 16L18 27V47L36 57L54 47V27Z" fill="#eaf6fc" fill-opacity=".35"/>
      <path d="M36 38L54 27V47L36 57Z" fill="#2f97d0" fill-opacity=".8"/>
      <path d="M18 27L36 38V57L18 47Z" fill="#9dd2ee" fill-opacity=".8"/>
      <path d="M18 55L36 66L60 52" fill="none" stroke="#062434" stroke-width="4"/>
    </svg>
    <span class="wmt">3D世界网</span>
    <span class="wmu">WWW.3DSJW.COM</span>
  </div>
</div>

<svg class="defs" aria-hidden="true">
<symbol id="b1" viewBox="0 0 24 24"><path d="M3 6v11c0 5 6 5 6 0V9c0-4 6-4 6 0v8c0 5 6 4 6-2V8" fill="none" stroke="#222" stroke-width="1.500"/><circle cx="3" cy="14" r="1.800" fill="#e01c1c"/><circle cx="15" cy="14" r="1.800" fill="#e01c1c"/><circle cx="21" cy="14" r="1.800" fill="#e01c1c"/></symbol>
<symbol id="b2" viewBox="0 0 24 24"><path d="M4 22L20 3" stroke="#222" stroke-width="1.500"/><circle cx="4" cy="21" r="2" fill="#e01c1c"/><circle cx="20" cy="4" r="2" fill="#e01c1c"/></symbol>
<symbol id="b3" viewBox="0 0 24 24"><path d="M3 4C13 4 19 11 21 22" fill="none" stroke="#222" stroke-width="1.800"/><circle cx="3" cy="4" r="2" fill="#e01c1c"/><circle cx="21" cy="21" r="2" fill="#e01c1c"/></symbol>
<symbol id="b4" viewBox="0 0 24 24"><circle cx="12" cy="12" r="9.500" fill="none" stroke="#222" stroke-width="1.500"/></symbol>
<symbol id="b5" viewBox="0 0 24 24"><path d="M2 3h10c5 0 7 3 7 8v11" fill="none" stroke="#a8a0a0" stroke-width="1.500"/><path d="M2 6h8c4 0 6 2 6 6v10" fill="none" stroke="#c8c0c0"/></symbol>
<symbol id="b6" viewBox="0 0 24 24"><path d="M2 3h16l3 19" fill="none" stroke="#a8a0a0" stroke-width="1.500"/><path d="M2 6h12l3 16" fill="none" stroke="#c8c0c0"/></symbol>
<symbol id="b7" viewBox="0 0 24 24"><path d="M3 5h18v15H3z" fill="none" stroke="#222" stroke-width="1.500"/><circle cx="3" cy="5" r="1.800" fill="#e01c1c"/><circle cx="21" cy="20" r="1.800" fill="#e01c1c"/></symbol>
<symbol id="b8" viewBox="0 0 24 24"><path d="M2 15l6-4 4-8 4 8 6-1M8 11l4 10 4-11" fill="none" stroke="#444" stroke-width="1.300"/><circle cx="8" cy="11" r="2" fill="#e01c1c"/><circle cx="16" cy="11" r="2" fill="#e01c1c"/><circle cx="12" cy="20" r="2" fill="#e01c1c"/></symbol>
<symbol id="b9" viewBox="0 0 24 24"><path d="M12 3v18M3 12h18" stroke="#222" stroke-width="1.500"/></symbol>
<symbol id="b10" viewBox="0 0 24 24"><path d="M3 12c0-6 5-8 8-6 3 1 3 5 7 5 3 1 3 6 1 8H6c-2-1-3-3-3-7z" fill="#fff" stroke="#999" stroke-width="1.500"/></symbol>
<symbol id="b11" viewBox="0 0 24 24"><path d="M3 3l13 20M3 17l20-5" stroke="#888"/><path d="M12 12l9-8 2 3-8 7z" fill="#c4a088"/></symbol>
<symbol id="b12" viewBox="0 0 24 24"><path d="M3 2l13 21M8 16L20 4" stroke="#888"/><path d="M13 13l8-10 2 2-7 10z" fill="#b8b490"/></symbol>
<symbol id="b13" viewBox="0 0 24 24"><path d="M13 1v22M1 13h22" stroke="#999"/><path d="M13 9l9 8" stroke="#c89090" stroke-width="1.500"/></symbol>
<symbol id="b14" viewBox="0 0 24 24"><path d="M2 14h20M2 10v8M22 10v8" stroke="#b46a6a"/><path d="M8 18l10-15 3 2-9 13z" fill="#c4a86a"/></symbol>
<symbol id="b15" viewBox="0 0 24 24"><path d="M2 14L11 5M6 16L15 7" stroke="#b08ab0" stroke-width="1.500"/><path d="M16 14v8M8 22h14" stroke="#a8a8a8"/></symbol>
<symbol id="b16" viewBox="0 0 24 24"><path d="M3 4v15h18V4M12 4v17" fill="none" stroke="#9a9ab0" stroke-width="1.500"/><path d="M7 2v6M17 2v6" stroke="#b46a9a"/></symbol>
<symbol id="b17" viewBox="0 0 24 24"><path d="M1 7l6 5-6 5z" fill="#7ab87a"/><path d="M9 13l11-10M13 14L23 5" stroke="#b08ab0" stroke-width="1.500"/><path d="M15 15v8M9 23h12" stroke="#a8a8a8"/></symbol>
<symbol id="b18" viewBox="0 0 24 24"><path d="M2 3h10v9H2zM2 15h6v7H2zM11 15h10v7H11z" fill="#eee" stroke="#888"/><path d="M10 14l10-10 3 3-10 9z" fill="#c4a06a"/></symbol>
<symbol id="b19" viewBox="0 0 24 24"><path d="M3 5c0-4 7-4 8 0" fill="none" stroke="#8a90a8" stroke-width="2"/><path d="M2 12h14v9H2z" fill="#9aa0b4"/><path d="M8 16l13-13 2 3-10 12z" fill="#b8b08a"/><path d="M13 16h9v7h-9z" fill="#c0b48a"/></symbol>
<symbol id="b20" viewBox="0 0 24 24"><path d="M3 5c0-4 7-4 8 0" fill="none" stroke="#8a90a8" stroke-width="2"/><path d="M4 11h10v9H4z" fill="#9aa0b4"/><path d="M10 16h12v6H10z" fill="#a8aeb8"/></symbol>
</svg>
</body>
</html>
```
FILE: styles.css
```css
* { box-sizing: border-box; }
html, body { margin: 0; padding: 0; background: #000; overflow: hidden; }
body { font-family: "Noto Sans CJK SC", "Liberation Sans", sans-serif; font-size: 13px; color: #222; }
.defs { position: absolute; width: 0; height: 0; }
svg { display: block; flex: none; }

.app { position: relative; width: 1728px; height: 972px; display: flex; flex-direction: column; overflow: hidden; }

/* title */
.title { height: 26px; background: #171717; border-top: 3px solid #4d4d4d; display: flex; align-items: flex-start; padding-left: 3px; }
.tlogo { width: 20px; height: 20px; }
.ttext { margin-left: 2px; color: #8a8a8a; font-size: 13.5px; line-height: 18px; white-space: pre; }
.winbtns { margin-left: auto; display: flex; gap: 4px; margin-top: 1px; padding-right: 1px; }
.winbtns i { width: 23px; height: 7px; background: #2e2e2e; }

/* menu */
.menu { height: 23px; background: #e4e4e4; display: flex; align-items: center; padding-left: 5px; }
.mlogo { width: 18px; height: 20px; margin-right: 7px; }
.m { width: 60.4px; font-size: 13px; line-height: 18px; padding-bottom: 3px; white-space: nowrap; letter-spacing: .3px; }
.m-w { width: 76px; }
.m-p { width: 73px; }
.m-c { width: 59px; }
.m-g { width: 67px; }

/* toolbars */
.row1 { height: 31px; background: #dfdfdf; }
.tb { display: flex; align-items: center; height: 31px; width: 542px; padding: 0 0 2px 4px; background: linear-gradient(#e9e9e9, #d9d9d9); border-top: 1px solid #f3f3f3; border-right: 1px solid #cfcfcf; border-bottom: 1px solid #c8c8c8; }
.gr { flex: none; width: 3px; height: 22px; margin-right: 4px; border-left: 2px dotted #999; }
.s21 { width: 20.7px; height: 20px; }
.lg { height: 23px; }
.s28 { width: 28px; height: 22px; }
.start { width: 26px; margin-left: 4px; font-size: 13px; line-height: 18px; padding-bottom: 1px; }
.c { flex: none; width: 8px; height: 3px; margin: 0 2px; position: relative; }
.c::after { content: ""; display: block; margin: 0 auto; width: 0; height: 0; border: 3px solid transparent; border-top: 4px solid #222; border-bottom: 0; }
.c-start { margin-left: 3px; margin-right: 0; }
.sp { flex: none; width: 1px; height: 26px; margin: 0 1px; background: #f4f4f4; box-shadow: -1px 0 0 #c9c9c9; }
.sp-w { margin: 0 2px; }
.sp-l { margin: 0 3px 0 2px; }
.search { flex: none; display: flex; align-items: center; justify-content: space-between; width: 125px; height: 21px; margin-left: 2px; padding: 0 4px 0 3px; background: #fff; border: 1px solid #bbb; border-radius: 3px; }
.ph { color: #b5b5b5; font-size: 13px; line-height: 18px; }
.mag { width: 15px; height: 15px; }

.row2 { height: 31px; display: flex; align-items: center; padding-left: 545px; background: linear-gradient(#e6e6e6, #dadada); border-bottom: 2px solid #a8a8a8; }
.stack { flex: none; position: relative; width: 20px; height: 29px; border: 1px solid #ececec; background: linear-gradient(90deg, transparent 3px, #999 3px, #999 4px, transparent 4px) 0 0/100% 3px repeat-y; }
.stack::after { content: ""; position: absolute; right: 5px; bottom: 3px; border: 3px solid transparent; border-top: 4px solid #222; border-bottom: 0; }
.row2 > .gr { margin-left: 3px; margin-right: 1px; width: 3px; }
.brk { flex: none; width: 14px; display: flex; justify-content: flex-end; }
.brk .gr { margin-right: 0; height: 26px; }
.act { background: #f4f4f4; border-radius: 3px; box-shadow: 0 0 0 1px #d4d4d4; }

.combo { flex: none; display: flex; align-items: stretch; height: 17px; background: #fff; border: 1px solid #7a7a7a; border-radius: 3px; font-size: 13px; line-height: 14px; }
.cv { flex: 1; padding-left: 2px; white-space: nowrap; color: #111; }
.dd { flex: none; width: 18px; background: linear-gradient(#cfe5fb, #4d9ae6); position: relative; border-radius: 0 2px 2px 0; }
.dd::after { content: ""; position: absolute; left: 4px; top: 5px; border: 5px solid transparent; border-top: 6px solid #111; border-bottom: 0; }
.c11 { width: 46px; margin: 0 7px 0 2px; }
.f1c { width: 132px; margin-right: 9px; }
.f2c { width: 138px; margin-right: 7px; }
.f3c { width: 138px; margin: 0 6px 0 2px; }

.row3 { height: 28px; display: flex; align-items: center; padding-left: 5px; background: linear-gradient(#e2e2e2, #dadada); border-bottom: 1px solid #cdcdcd; }
.first { margin-left: 0; }
.row3 .s21 { height: 18px; }
.row3 .sp { margin: 0 2px; height: 22px; }
.row3 .c { margin: 0 1px; }

.cue { height: 19px; display: flex; background: #e1e1e1; border-bottom: 1px solid #777; }
.cuetext { width: 820px; padding-left: 3px; font-size: 14px; font-weight: 700; line-height: 15px; color: #111; }
.cuerest { flex: 1; border-left: 1px solid #f4f4f4; }

/* work */
.work { height: 737px; display: flex; }
.view { width: 1378px; background: #000; }
.axis { fill: #0d0dff; font: 13px "Liberation Sans", sans-serif; }
.triz { fill: #1860e8; font: 11px "Liberation Sans", sans-serif; }
.triy { fill: #1f9a2f; font: 11px "Liberation Sans", sans-serif; }

.nav { width: 322px; display: flex; flex-direction: column; padding: 0 7px 0 10px; background: #e9e9e9; border-left: 1px solid #bdbdbd; }
.navtop { height: 35px; padding: 12px 0 0 4px; }
.winbox { display: block; width: 13px; height: 13px; background: #fff; border: 1px solid #222; border-top-width: 3px; }
.table { height: 615px; display: flex; flex-direction: column; background: #fff; border: 1px solid #8b8b8b; }
.thead { height: 17px; background: linear-gradient(#fafafa, #e6e6e6); border-bottom: 1px solid #bbb; padding-left: 7px; font-size: 13px; line-height: 14px; }
.tbody { flex: 1; background:
  linear-gradient(90deg, transparent 180px, #e6e6e6 180px, #e6e6e6 181px, transparent 181px, transparent 270px, #e6e6e6 270px, #e6e6e6 271px, transparent 271px),
  repeating-linear-gradient(#fff 0, #fff 17px, #eee 17px, #eee 18px, #f5f5f5 18px, #f5f5f5 35px, #eee 35px, #eee 36px); }
.tr { position: relative; height: 18px; display: flex; align-items: center; padding-left: 3px; }
.pm { flex: none; width: 9px; height: 9px; border: 1px solid #888; border-radius: 2px; font: 9px/7px "Liberation Sans", sans-serif; text-align: center; color: #333; background: #fff; }
.dash { flex: none; width: 5px; border-top: 1px dotted #999; }
.dots { flex: none; width: 14px; height: 9px; margin-left: 7px; align-self: flex-start; margin-top: 9px; border-left: 1px dotted #999; border-top: 1px dotted #999; }
.gd { flex: none; width: 5px; height: 5px; border-radius: 50%; background: #18b844; margin-left: 1px; }
.ic { width: 15px; height: 15px; }
.hidden-rows { height: 89px; }
.ch { padding-left: 0; margin-left: 26px; border-left: 1px dotted #999; }
.ch.last { border-left: 0; }
.tk { flex: none; width: 9px; height: 9px; align-self: flex-start; border-bottom: 1px dotted #999; }
.ch.last .tk { border-left: 1px dotted #999; }
.cb { flex: none; width: 12px; height: 12px; margin-right: 1px; background: #fff; border: 1.5px solid #222; }
.cb svg { width: 10px; height: 10px; }
.ch .ic { margin-right: 2px; }
.nm { flex: none; width: 115px; font-size: 13px; line-height: 16px; padding-bottom: 2px; white-space: pre; color: #222; }
.nm.off { color: #a6a6a6; }
.ok { width: 14px; height: 14px; margin-left: 2px; }
.hscroll { height: 19px; display: flex; align-items: center; background: #efefef; border-top: 3px solid #fff; }
.ar { flex: none; width: 19px; text-align: center; font: 700 17px/14px "Liberation Sans", sans-serif; color: #555; }
.thumb { width: 222px; height: 16px; background: #cacaca; }
.ar:last-child { margin-left: auto; }
.split { height: 13px; display: flex; align-items: center; justify-content: center; background: linear-gradient(transparent 6px, #d4d4d4 6px, #d4d4d4 7px, transparent 7px); }
.handle { width: 54px; height: 5px; background: #dcdcdc; border: 1px solid #aaa; border-top: 0; box-shadow: 0 0 0 2px #e9e9e9; }
.nh { height: 22px; flex: none; margin-bottom: 1px; display: flex; align-items: center; justify-content: space-between; padding-left: 6px; font-weight: 700; font-size: 13px; color: #222; letter-spacing: 1px; background: linear-gradient(#f9f9f9 0, #f4f4f4 50%, #dcdcdc 52%, #d8d8d8 100%); border-bottom: 1px solid #9f9f9f; }
.nh > span { line-height: 16px; padding-bottom: 2px; }
.chev { flex: none; width: 23px; height: 100%; position: relative; border-left: 2px solid #b9b9b9; }
.chev::after { content: ""; position: absolute; left: 6px; width: 8px; height: 8px; border-right: 2.4px solid #666; border-bottom: 2.4px solid #666; }
.chev.dn::after { top: 3px; transform: rotate(45deg); }
.chev.up::after { top: 9px; transform: rotate(225deg); }

.tabs { flex: 1; background: #a9a9a9; display: flex; flex-direction: column; gap: 2px; padding: 252px 0 0 2px; }
.tab { width: 22px; height: 36px; display: flex; align-items: center; justify-content: center; background: #e6e6e6; border: 1px solid #999; border-left: 0; border-radius: 0 4px 4px 0; }
.tab:first-child { margin-bottom: 11px; }
.tab svg { width: 20px; height: 24px; }

/* sketch toolbar */
.sketchbar { height: 32px; display: flex; align-items: center; padding-left: 318px; background: linear-gradient(#e6e6e6, #dcdcdc); border-top: 2px solid #9a9a9a; }
.sk0 { width: 21px; height: 22px; margin-left: 1px; }
.flag { flex: none; width: 21px; height: 24px; margin: 0 4px 0 7px; background: repeating-conic-gradient(#82959f 0 25%, #5f6f78 0 50%) 0 0/6px 6px; outline: 1px solid #8fa0a8; }
.fin { flex: none; width: 57px; color: #aaa; font-size: 13px; line-height: 18px; padding-bottom: 2px; letter-spacing: .2px; white-space: nowrap; }

/* taskbar */
.taskbar { flex: 1; display: flex; align-items: stretch; background: #0a0e14; position: relative; }
.tk-win { width: 20px; height: 20px; margin: 12px 0 0 17px; }
.tk-view { width: 20px; height: 20px; margin: 12px 0 0 33px; }
.tk-app { width: 54px; display: flex; justify-content: center; padding-top: 6px; border-bottom: 3px solid #6cb0e8; }
.tk-app svg { width: 31px; height: 31px; }
.active { margin-left: 22px; background: #363a40; }
.ie { width: 45px; margin-left: 6px; }
.ie svg { width: 28px; height: 31px; }
.tray { margin-left: auto; display: flex; align-items: center; color: #e2e6ea; }
.tr-i { height: 14px; width: 16px; }
.bat { width: 20px; margin-left: 11px; }
.wifi { width: 15px; margin-left: 11px; height: 16px; }
.vol { width: 18px; margin-left: 9px; height: 16px; }
.ime { font-size: 15px; margin-left: 10px; width: 16px; line-height: 16px; }
.clock { display: flex; flex-direction: column; align-items: center; width: 68px; margin-left: 12px; font: 14px/21px "Liberation Sans", sans-serif; letter-spacing: .3px; }
.note { width: 17px; height: 17px; margin-left: 23px; }
.desk { width: 1px; height: 100%; margin-left: 23px; margin-right: 4px; background: #3a3e44; }

/* floating palettes */
.pop { position: absolute; display: flex; align-items: center; background: linear-gradient(#efefef, #bcbcbc); border: 1px solid #888; }
.grip { flex: none; align-self: stretch; width: 12px; background: radial-gradient(circle, #9a9a9a 0 .8px, transparent 1.200px) 0 0/4px 4px, #454545; border-right: 1px solid #eee; }
.poplab { font-size: 13.5px; line-height: 18px; padding-bottom: 2px; color: #222; margin-left: 5px; white-space: nowrap; }
.pop-sec .poplab { margin-left: 3px; }
.pop-off { left: 585px; top: 158px; width: 145px; height: 26px; }
.pop-sec { left: 437px; top: 257px; width: 47px; height: 25px; }
.popinput { flex: none; display: flex; width: 67px; height: 17px; margin-left: 2px; background: #fff; border: 1px solid #999; border-radius: 3px; overflow: hidden; font: 12px/15px "Liberation Sans", sans-serif; }
.dd2 { flex: none; width: 17px; background: linear-gradient(#e2eefb, #5fa8ea); position: relative; }
.dd2::after { content: ""; position: absolute; left: 3px; top: 2px; width: 11px; height: 11px; background: #111; clip-path: polygon(30% 0, 70% 0, 70% 45%, 100% 45%, 50% 100%, 0 45%, 30% 45%); }
.pop-warn { left: 1000px; top: 708px; width: 216px; height: 52px; background: #c8c8c8; }
.warnbox { width: 166px; height: 44px; margin-left: 6px; padding: 0 0 0 7px; background: #d4d4d4; border: 1px solid #a9a9a9; border-bottom: 2px solid #fff; }
.warnbox strong { display: block; font-size: 14px; line-height: 20px; color: #222; }
.warnmsg { display: flex; align-items: center; gap: 10px; margin-left: -4px; font-size: 13px; line-height: 20px; letter-spacing: .05px; }
.warnmsg svg { width: 14px; height: 14px; }
.warnx { flex: none; align-self: flex-start; display: flex; align-items: center; justify-content: center; width: 20px; height: 20px; margin: 4px 0 0 6px; background: linear-gradient(#f6f6f6, #cfcfcf); border: 1px solid #999; border-radius: 3px; }
.warnx svg { width: 14px; height: 14px; }

/* dialog */
.dialog { position: absolute; left: 1412px; top: 10px; width: 316px; height: 388px; display: flex; flex-direction: column; background: #e8e8e8; border-radius: 4px 4px 6px 6px; overflow: hidden; }
.dtitle { flex: none; height: 22px; display: flex; align-items: center; background: linear-gradient(#555 0, #222 3px, #111 100%); color: #f2f2f2; border-bottom: 1px solid #666; }
.gear { width: 14px; height: 14px; margin: 0 6px 0 3px; }
.dname { flex: 1; padding: 0 0 2px 6px; border-left: 1px solid #888; font-size: 14.5px; line-height: 19px; color: #eee; letter-spacing: .4px; }
.dbtn { flex: none; width: 21px; height: 21px; display: flex; align-items: center; justify-content: center; border-left: 1px solid #999; }
.dbtn svg { width: 14px; height: 14px; }
.dbody { flex: 1; display: flex; flex-direction: column; padding: 3px 6px 0; border-left: 1px solid #888; }
.gh { flex: none; height: 22px; display: flex; align-items: center; justify-content: space-between; padding-left: 4px; font-size: 14px; font-weight: 700; color: #222; background: linear-gradient(#fafafa 0, #f4f4f4 50%, #dedede 54%, #e0e0e0 100%); border-bottom: 1px solid #8f8f8f; }
.gh > span { line-height: 18px; padding-bottom: 2px; }
.gh .chev { width: 24px; border-left-color: #c0c0c0; }
.gt { margin-top: 1px; }
.gb { flex: none; background: #cfcfcf; border-left: 1px solid #aaa; border-right: 1px solid #aaa; }
.sel { height: 43px; display: flex; align-items: center; padding: 1px 8px 0 6px; }
.lab { flex: 1; height: 27px; display: flex; align-items: center; gap: 4px; padding-left: 0; font-size: 13px; color: #333; letter-spacing: .3px; border-radius: 5px 0 0 5px; }
.lab > span { line-height: 18px; padding-bottom: 2px; }
.lab svg { width: 13px; height: 13px; }
.lab.on { background: linear-gradient(90deg, #e9a86f, #dcb28e 60%, #cfcfcf 100%); }
.cubtn { flex: none; width: 27px; height: 28px; display: flex; align-items: center; justify-content: center; background: linear-gradient(#fafafa, #dadada); border: 1px solid #888; border-radius: 4px; }
.cubtn.on { background: linear-gradient(#ffd9b4, #f7892c); }
.cubtn svg { width: 23px; height: 24px; }
.gb.off { height: 57px; padding: 7px 8px 0 6px; display: flex; flex-direction: column; gap: 4px; color: #333; }
.fld { display: flex; align-items: center; justify-content: space-between; font-size: 13px; letter-spacing: .3px; color: #333; height: 19px; }
.fl { line-height: 17px; padding-bottom: 2px; }
.num { flex: none; display: flex; width: 115px; height: 19px; background: #fff; border: 1px solid #8d8d8d; border-radius: 4px; overflow: hidden; font: 12px/17px "Liberation Sans", sans-serif; }
.mm { flex: none; width: 32px; padding-left: 4px; background: #cdcdcd; font: 700 12px/17px "Liberation Mono", monospace; color: #333; letter-spacing: -1px; }
.boolb { height: 37px; padding: 8px 8px 0 6px; }
.boolb .fld { height: 20px; }
.bl { height: 20px; align-items: center; font: 13px/16px "Noto Sans CJK SC", sans-serif; overflow: visible; }
.bl svg { width: 14px; height: 14px; margin-left: 3px; }
.bl .cv { padding-left: 3px; padding-bottom: 2px; }
.bl .dd { align-self: stretch; width: 19px; }
.dfoot { flex: none; display: flex; justify-content: flex-end; gap: 7px; margin-top: 3px; padding: 5px 9px 0 0; border-top: 1px solid #f8f8f8; }
.btn { width: 52px; height: 19px; padding: 0; font: 13px/16px "Noto Sans CJK SC", sans-serif; letter-spacing: 1px; color: #333; background: linear-gradient(#f8f8f8, #d8d8d8); border: 1px solid #8a8a8a; border-radius: 4px; }
.ok2 { letter-spacing: 0; background: linear-gradient(#e8f6de, #8fdc6e); border: 1px solid #4f8f4f; }
.dbottom { flex: none; height: 8px; background: linear-gradient(#555, #1c1c1c 40%); }

/* watermark */
.wm { position: absolute; left: 1446px; top: 877px; width: 260px; height: 82px; pointer-events: none; }
.wmlogo { position: absolute; left: 0; top: 0; width: 72px; height: 82px; }
.wmt { position: absolute; left: 81px; top: 8px; font: 700 41px/44px "Noto Sans CJK SC", sans-serif; color: rgba(255, 255, 255, .42); white-space: nowrap; }
.wmu { position: absolute; left: 81px; top: 56px; font: 14px/16px "Liberation Sans", sans-serif; letter-spacing: 2.2px; color: rgba(255, 255, 255, .38); white-space: nowrap; }
```
